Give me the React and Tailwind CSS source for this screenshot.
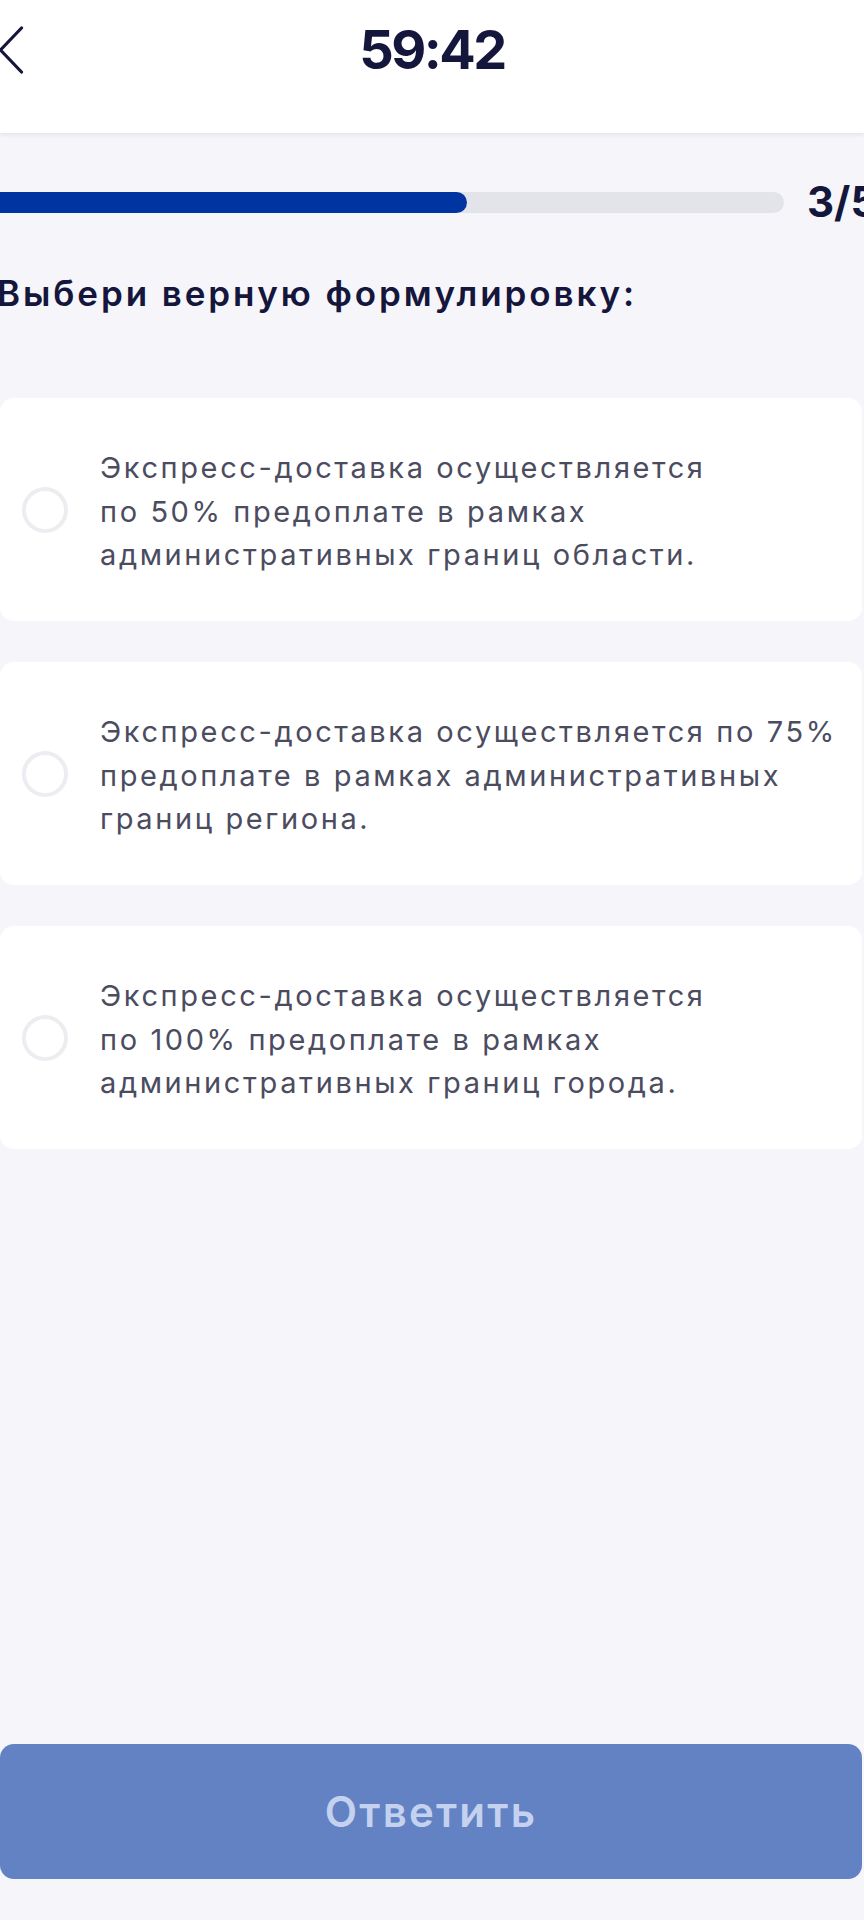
import React from "react";

const options = [
  ["Экспресс-доставка осуществляется", "по 50% предоплате в рамках", "административных границ области."],
  ["Экспресс-доставка осуществляется по 75%", "предоплате в рамках административных", "границ региона."],
  ["Экспресс-доставка осуществляется", "по 100% предоплате в рамках", "административных границ города."],
];

export default function App() {
  return (
    <div className="h-screen w-full overflow-hidden bg-[#f5f5fa] font-['Inter',sans-serif] flex flex-col">
      <header className="h-[133px] shrink-0 bg-white shadow-[0_2px_4px_rgba(0,0,0,0.07)] relative z-10">
        <div className="h-[100px] grid grid-cols-[1fr_auto_1fr] items-center">
          <div className="flex items-center">
            <svg width="26" height="48" viewBox="0 0 26 48" className="-ml-[1px]" fill="none">
              <path d="M22.5 2 L1.5 24 L22.5 46" stroke="#15163b" strokeWidth="3.2" strokeLinecap="round" strokeLinejoin="round" />
            </svg>
          </div>
          <div className="text-[54px] font-bold leading-none text-[#15163b] tracking-[-2.5px]">59:42</div>
          <div />
        </div>
      </header>

      <div className="mt-[47px] h-[44px] flex items-center shrink-0">
        <div className="-ml-[10px] w-[794px] h-[21px] shrink-0 rounded-full bg-[#e3e4ea] overflow-hidden">
          <div className="h-full w-[477px] rounded-full bg-[#0034a1]" />
        </div>
        <div className="ml-[23px] text-[42px] font-bold leading-none text-[#15163b] whitespace-nowrap">3/5</div>
      </div>

      <h1 className="mt-[49px] -ml-[3px] text-[35px] font-semibold leading-[40px] text-[#15163b] tracking-[2.9px] whitespace-nowrap shrink-0">
        Выбери верную формулировку:
      </h1>

      <div className="mt-[85px] flex flex-col gap-[41px] shrink-0">
        {options.map((lines, i) => (
          <div key={i} className="h-[223px] w-[862px] rounded-[14px] bg-white flex items-center pl-[22px]">
            <div className="w-[46px] h-[46px] rounded-full border-[4px] border-[#ededf1] shrink-0" />
            <div className="ml-[32px] mt-[4px] text-[29px] leading-[43.5px] text-[#4b4c60] tracking-[2.6px]">
              {lines.map((l, j) => (
                <div key={j} className="whitespace-nowrap">{l}</div>
              ))}
            </div>
          </div>
        ))}
      </div>

      <button className="mt-auto mb-[41px] h-[135px] w-[862px] shrink-0 rounded-[14px] bg-[#6282c4] text-[42px] font-semibold text-[#c4d2ef] tracking-[2.2px] flex items-center justify-center">
        Ответить
      </button>
    </div>
  );
}
